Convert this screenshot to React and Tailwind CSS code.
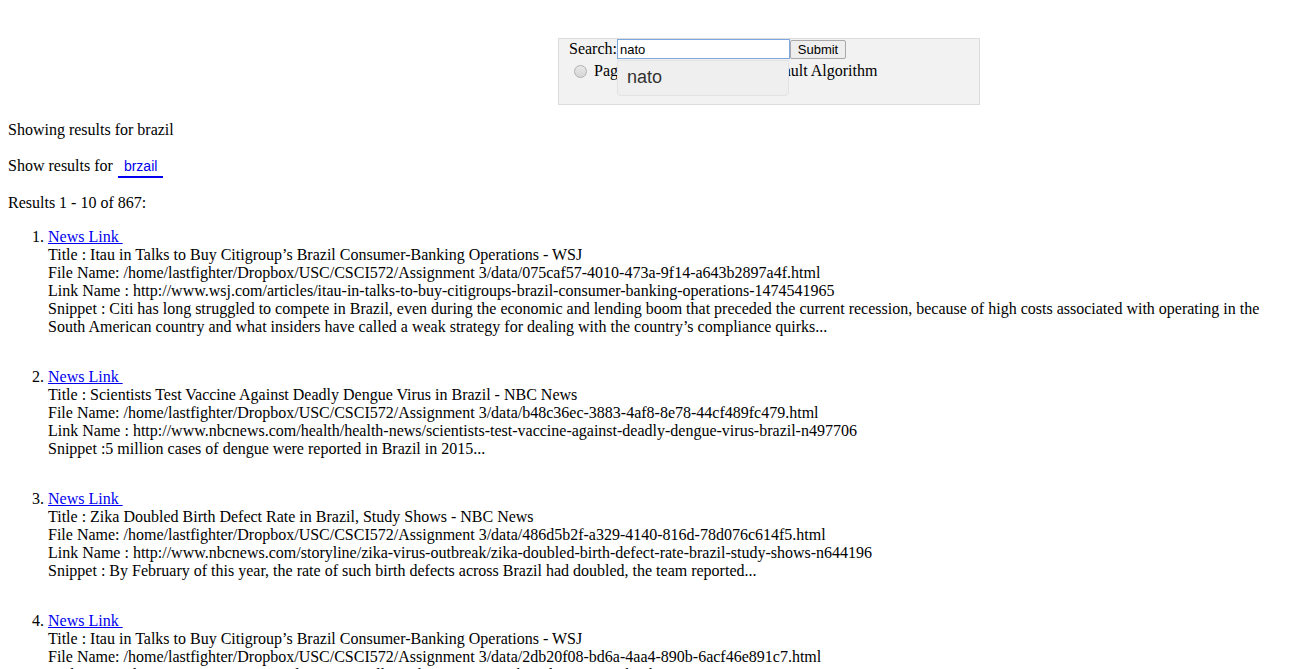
const results = [
  {
    title: "Itau in Talks to Buy Citigroup’s Brazil Consumer-Banking Operations - WSJ",
    file: "/home/lastfighter/Dropbox/USC/CSCI572/Assignment 3/data/075caf57-4010-473a-9f14-a643b2897a4f.html",
    link: "http://www.wsj.com/articles/itau-in-talks-to-buy-citigroups-brazil-consumer-banking-operations-1474541965",
    snippet: "Citi has long struggled to compete in Brazil, even during the economic and lending boom that preceded the current recession, because of high costs associated with operating in the South American country and what insiders have called a weak strategy for dealing with the country’s compliance quirks...",
    sep: " : ",
  },
  {
    title: "Scientists Test Vaccine Against Deadly Dengue Virus in Brazil - NBC News",
    file: "/home/lastfighter/Dropbox/USC/CSCI572/Assignment 3/data/b48c36ec-3883-4af8-8e78-44cf489fc479.html",
    link: "http://www.nbcnews.com/health/health-news/scientists-test-vaccine-against-deadly-dengue-virus-brazil-n497706",
    snippet: "5 million cases of dengue were reported in Brazil in 2015...",
    sep: " :",
  },
  {
    title: "Zika Doubled Birth Defect Rate in Brazil, Study Shows - NBC News",
    file: "/home/lastfighter/Dropbox/USC/CSCI572/Assignment 3/data/486d5b2f-a329-4140-816d-78d076c614f5.html",
    link: "http://www.nbcnews.com/storyline/zika-virus-outbreak/zika-doubled-birth-defect-rate-brazil-study-shows-n644196",
    snippet: "By February of this year, the rate of such birth defects across Brazil had doubled, the team reported...",
    sep: " : ",
  },
  {
    title: "Itau in Talks to Buy Citigroup’s Brazil Consumer-Banking Operations - WSJ",
    file: "/home/lastfighter/Dropbox/USC/CSCI572/Assignment 3/data/2db20f08-bd6a-4aa4-890b-6acf46e891c7.html",
    link: "http://www.wsj.com/articles/itau-in-talks-to-buy-citigroups-brazil-consumer-banking-operations-1474541965",
    snippet: "Citi has long struggled to compete in Brazil...",
    sep: " : ",
  },
];

function SearchBox() {
  return (
    <div className="ml-[550px] mt-[38px] w-[422px] h-[67px] border border-[#dcdcdc] bg-[#f2f2f2] pl-[10px]">
      <div className="relative flex items-start">
        <span className="leading-[18px] mt-[1px]">Search:</span>
        <input
          defaultValue="nato"
          className="w-[173px] h-[20px] border border-[#7ea6e0] bg-white px-[2px] text-[13px] leading-[18px] outline-none font-['Liberation_Sans',sans-serif]"
        />
        <button className="mt-[1px] h-[19px] w-[56px] border border-[#a9a9a9] rounded-[2px] bg-[#eeeeee] text-[13px] leading-[15px] font-['Liberation_Sans',sans-serif]">
          Submit
        </button>
        <div className="absolute left-[48px] top-[21px] w-[172px] h-[36px] rounded-b-[4px] border border-[#e2e2e2] bg-[#efefef] pl-[9px] pt-[4px] text-[18px] leading-[24px] text-[#333] font-['Liberation_Sans',sans-serif] z-10">
          nato
        </div>
      </div>
      <div className="flex items-center leading-[18px] mt-[3px]">
        <span className="w-[13px] h-[13px] rounded-full border border-[#b0b0b0] bg-gradient-to-b from-[#e8e8e8] to-[#d6d6d6] ml-[5px] mr-[7px]" />
        <span>PageRank Algorithm</span>
        <span className="w-[13px] h-[13px] rounded-full border border-[#b0b0b0] bg-[#e6e6e6] ml-[9px] mr-[9px]" />
        <span>Default Algorithm</span>
      </div>
    </div>
  );
}

export default function App() {
  return (
    <div className="h-[669px] overflow-hidden px-2 text-[16px] leading-[18px] text-black font-['Liberation_Serif',serif]">
      <SearchBox />
      <p className="mt-[16px]">Showing results for brazil</p>
      <p className="mt-[18px] flex items-baseline">
        <span>Show results for&nbsp;</span>
        <a
          href="#"
          className="ml-[1px] px-[6px] pb-[1px] border-b-2 border-[#0000ee] text-[#0000ee] text-[14px] leading-[17px] font-['Liberation_Sans',sans-serif]"
        >
          brzail
        </a>
      </p>
      <p className="mt-[16px]">Results 1 - 10 of 867:</p>
      <ol className="list-decimal pl-[40px] mt-[16px]">
        {results.map((r, i) => (
          <li key={i} className="mb-[32px]">
            <a href="#" className="text-[#0000ee] underline">
              News Link&nbsp;
            </a>
            <br />
            Title : {r.title}
            <br />
            File Name: {r.file}
            <br />
            Link Name : {r.link}
            <br />
            Snippet{r.sep}{r.snippet}
          </li>
        ))}
      </ol>
    </div>
  );
}
